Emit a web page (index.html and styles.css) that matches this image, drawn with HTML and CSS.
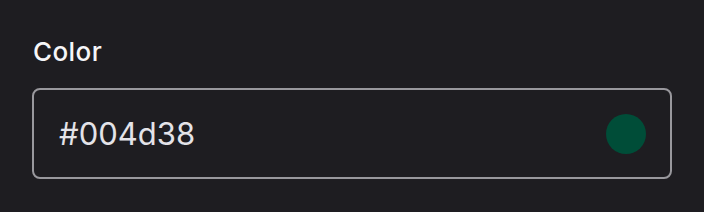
FILE: index.html
```html
<!DOCTYPE html>
<html lang="en">
<head>
    <meta charset="UTF-8">
    <meta name="viewport" content="width=device-width, initial-scale=1.0">
    <title>Color</title>
    <link rel="stylesheet" href="styles.css">
</head>
<body>
    <div class="field">
        <label class="field-label" for="color">Color</label>
        <div class="color-input">
            <span class="color-value" id="color">#004d38</span>
            <span class="swatch"></span>
        </div>
    </div>
</body>
</html>
```

FILE: styles.css
```css
* {
    margin: 0;
    padding: 0;
    box-sizing: border-box;
}

body {
    font-family: Inter, "Noto Sans", sans-serif;
    background-color: #1e1d21;
    color: #f4f4f6;
    width: 704px;
    height: 212px;
    overflow: hidden;
}

.field {
    display: flex;
    flex-direction: column;
    gap: 18px;
    padding: 34px 32px 0;
}

.field-label {
    font-size: 26px;
    font-weight: 500;
    letter-spacing: 0.4px;
    line-height: 36px;
    color: #f6f6f8;
    margin-left: 1px;
}

.color-input {
    display: flex;
    align-items: center;
    justify-content: space-between;
    height: 91px;
    padding: 0 24px 0 25px;
    border: 2px solid #99989d;
    border-radius: 8px;
}

.color-value {
    font-size: 31px;
    color: #e4e3e8;
}

.swatch {
    width: 40px;
    height: 40px;
    border-radius: 50%;
    background-color: #004d38;
}
```
